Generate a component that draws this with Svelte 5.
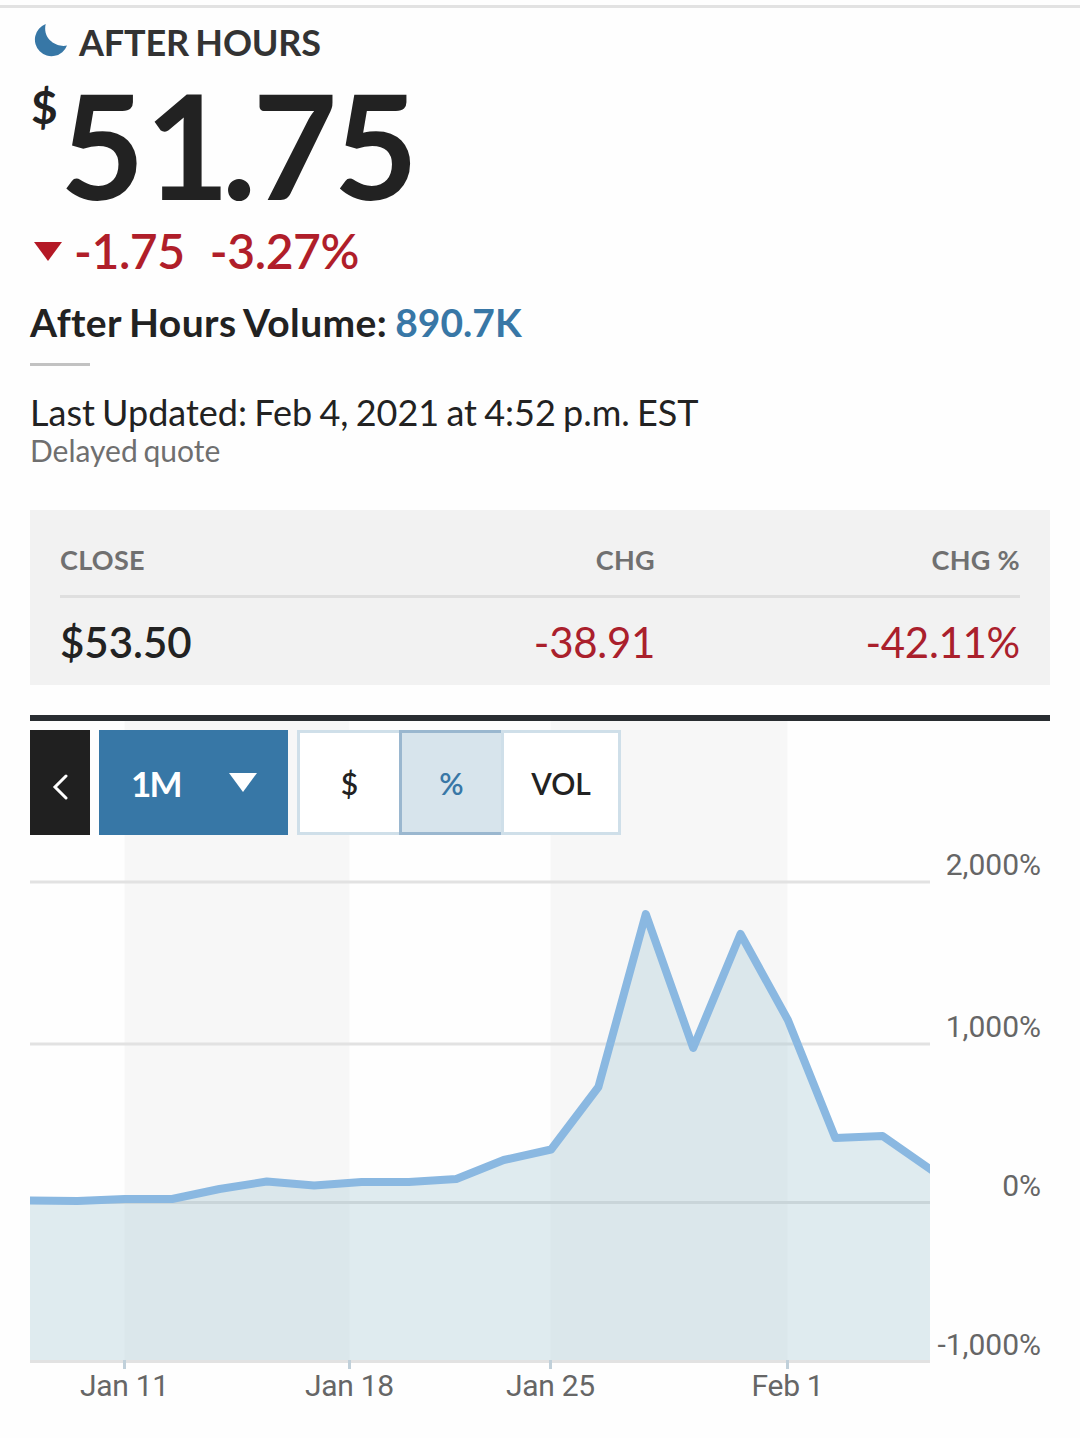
<script>
  const width = 900;
  const bottom = 641;
  const grid = [
    { label: "2,000%", y: 161, text: 153.5 },
    { label: "1,000%", y: 323, text: 315.5 },
    { label: "0%", y: 481.5, text: 474.5 },
    { label: "-1,000%", y: 640.5, text: 633.5 },
  ];
  const dates = [
    { label: "Jan 11", x: 94.5 },
    { label: "Jan 18", x: 319.5 },
    { label: "Jan 25", x: 520.5 },
    { label: "Feb 1", x: 757.5 },
  ];
  const closes = [
    479.5, 480, 478, 478, 468, 460.5, 464.5, 461, 461, 458, 439, 428.5, 366,
    193, 327, 213, 299, 417, 415, 448,
  ];
  const step = width / (closes.length - 1);
  const line = closes.map((y, i) => `${(i * step).toFixed(1)},${y}`).join(" ");

  let unit = "%";
</script>

<style>
  :global(body) {
    margin: 0;
    background: #fefefe;
  }
  .quote {
    box-sizing: border-box;
    width: 1080px;
    height: 1438px;
    overflow: hidden;
    padding: 5px 30px 0;
    font-family: Lato, sans-serif;
    color: #222;
    white-space: nowrap;
  }
  .top-rule {
    height: 3px;
    margin: 0 -30px;
    background: #e2e2e2;
  }
  .status {
    display: flex;
    height: 44px;
    margin-top: 12px;
    padding-left: 4px;
    line-height: 44px;
    font-size: 36px;
    font-weight: 700;
    letter-spacing: -0.2px;
    word-spacing: -2px;
    color: #333;
  }
  .status svg {
    margin: 3px 11px 0 0;
  }
  .price {
    display: flex;
    height: 150px;
    margin-top: 5px;
  }
  .price sup {
    width: 29px;
    padding-left: 1px;
    line-height: 76px;
    font-size: 46px;
    font-weight: 700;
  }
  .price .value {
    line-height: 150px;
    font-size: 146px;
    font-weight: 700;
    letter-spacing: -3.8px;
  }
  .price .one {
    margin: 0 -4px 0 4px;
  }
  .change {
    display: flex;
    align-items: center;
    height: 60px;
    margin-top: 2px;
    padding-left: 4px;
    line-height: 60px;
    font-size: 48px;
    font-weight: 600;
    letter-spacing: -0.4px;
    color: #b01e2a;
  }
  .change svg {
    margin: 2px 12px 0 0;
  }
  .change .percent {
    margin-left: 25px;
  }
  .volume {
    margin-top: 16px;
    line-height: 50px;
    font-size: 39px;
    font-weight: 700;
    font-variant-ligatures: none;
    letter-spacing: 0.4px;
    word-spacing: -2px;
  }
  .volume span {
    letter-spacing: 0;
    color: #3877a6;
  }
  .short-rule {
    width: 60px;
    height: 3px;
    margin-top: 16px;
    background: #c2c2c2;
  }
  .updated {
    margin-top: 24px;
    line-height: 44px;
    font-size: 36px;
    word-spacing: -2px;
  }
  .delayed {
    line-height: 36px;
    margin-top: -2px;
    font-size: 30px;
    word-spacing: -2px;
    color: #6f6f6f;
  }
  table {
    width: 1020px;
    height: 175px;
    margin-top: 42px;
    padding: 0 30px;
    border-spacing: 0;
    table-layout: fixed;
    background: #f2f2f2;
  }
  th,
  td {
    padding: 0;
    text-align: right;
  }
  th:first-child,
  td:first-child {
    width: 230px;
    text-align: left;
  }
  th:last-child,
  td:last-child {
    width: 365px;
  }
  th {
    height: 88px;
    border-bottom: 3px solid #dfdfdf;
    padding-top: 15px;
    box-sizing: border-box;
    line-height: 32px;
    font-size: 27px;
    font-weight: 700;
    letter-spacing: 0.3px;
    color: #707070;
  }
  td {
    height: 87px;
    line-height: 50px;
    font-size: 42px;
    letter-spacing: -0.3px;
    color: #aa202c;
  }
  td.close {
    font-weight: 600;
    letter-spacing: 0;
    color: #222;
  }
  .chart {
    position: relative;
    margin-top: 30px;
    border-top: 6px solid #292d31;
  }
  .chart > svg {
    display: block;
    font-family: Roboto, sans-serif;
    font-size: 30px;
  }
  .dates {
    letter-spacing: -0.3px;
  }
  .toolbar {
    position: absolute;
    top: 9px;
    left: 0;
    display: flex;
    height: 105px;
  }
  button {
    box-sizing: border-box;
    margin: 0;
    padding: 0;
    border: 3px solid #cfdfe9;
    border-radius: 0;
    background: #fff;
    font-family: inherit;
    font-size: 30px;
    font-weight: 600;
    color: #222;
  }
  .back {
    width: 60px;
    margin-right: 9px;
    border: 0;
    background: #202020;
  }
  .back svg {
    display: block;
    margin: 9px auto 0 22px;
  }
  .range {
    display: flex;
    align-items: center;
    justify-content: space-between;
    width: 189px;
    margin-right: 9px;
    padding: 1px 31px 0 32px;
    border: 0;
    background: #3777a6;
    font-size: 35px;
    font-weight: 700;
    letter-spacing: -1.8px;
    color: #fff;
  }
  .unit {
    width: 102px;
    padding-top: 1px;
    border-right: 0;
  }
  .unit:last-child {
    width: 120px;
    border-right: 3px solid #cfdfe9;
  }
  .unit.active {
    border-color: #9ab7cf;
    background: #d7e4ec;
    color: #3877a6;
  }
</style>

<main class="quote">
  <div class="top-rule"></div>
  <div class="status">
    <svg width="34" height="36" viewBox="0 0 34 36">
      <path
        d="M11.7 1 A16.6 16.6 0 1 0 33 22.5 C24 25 8 17 11.7 1 Z"
        fill="#3777a6" />
    </svg>
    <span>AFTER HOURS</span>
  </div>
  <div class="price">
    <sup>$</sup>
    <span class="value">5<span class="one">1</span>.75</span>
  </div>
  <div class="change">
    <svg width="28" height="20" viewBox="0 0 28 20">
      <path d="M0 0H28L14 19Z" fill="#b41926" />
    </svg>
    <span>-1.75</span>
    <span class="percent">-3.27%</span>
  </div>
  <div class="volume">After Hours Volume: <span>890.7K</span></div>
  <div class="short-rule"></div>
  <div class="updated">Last Updated: Feb 4, 2021 at 4:52 p.m. EST</div>
  <div class="delayed">Delayed quote</div>

  <table>
    <thead>
      <tr>
        <th>CLOSE</th>
        <th>CHG</th>
        <th>CHG %</th>
      </tr>
    </thead>
    <tbody>
      <tr>
        <td class="close">$53.50</td>
        <td>-38.91</td>
        <td>-42.11%</td>
      </tr>
    </tbody>
  </table>

  <div class="chart">
    <svg width="1020" height="700" viewBox="0 0 1020 700">
      <g fill="#f7f7f7">
        <rect x="94.5" y="0" width="225" height={bottom} />
        <rect x="520.5" y="0" width="237" height={bottom} />
      </g>
      {#each grid as row}
        <path d="M0 {row.y}H{width}" stroke={row.label === "0%" ? "#dcdcdc" : "#e2e2e2"} stroke-width="3" />
        <text x="1011" y={row.text} text-anchor="end" fill="#666">{row.label}</text>
      {/each}
      <polygon points="0,{bottom - 2} {line} {width},{bottom - 2}" fill="#a4c8d4" fill-opacity="0.34" />
      <svg {width} height="700">
        <polyline
          points={line}
          fill="none"
          stroke="#8ab8e1"
          stroke-width="8"
          stroke-linejoin="round"
          stroke-linecap="square" />
      </svg>
      <g class="dates">
        {#each dates as date}
          <path d="M{date.x} 639V648" stroke="#c0d0da" stroke-width="3" />
          <text x={date.x} y="675" text-anchor="middle" fill="#666">{date.label}</text>
        {/each}
      </g>
    </svg>

    <div class="toolbar">
      <button class="back" aria-label="Back">
        <svg width="16" height="26" viewBox="0 0 16 26">
          <path d="M14 2L3 13L14 24" fill="none" stroke="#fff" stroke-width="3" stroke-linecap="round" />
        </svg>
      </button>
      <button class="range">
        1M
        <svg width="28" height="20" viewBox="0 0 28 20">
          <path d="M0 0H28L14 19Z" fill="#fff" />
        </svg>
      </button>
      {#each ["$", "%", "VOL"] as name}
        <button class="unit" class:active={unit === name} on:click={() => (unit = name)}>
          {name}
        </button>
      {/each}
    </div>
  </div>
</main>
